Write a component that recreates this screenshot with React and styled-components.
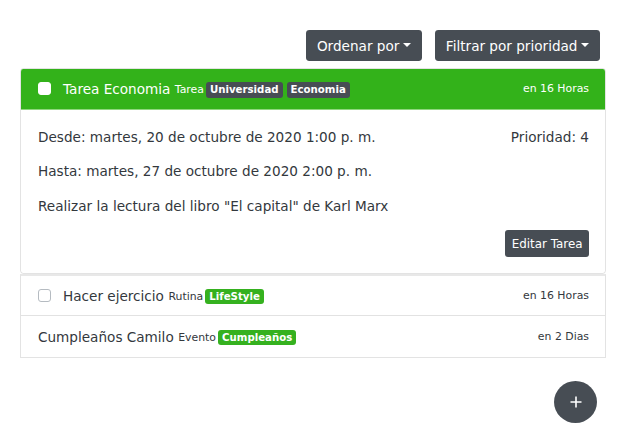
import React from "react";
import styled, { createGlobalStyle } from "styled-components";

const GlobalStyle = createGlobalStyle`
  html, body { margin: 0; padding: 0; background: #ffffff; }
  body {
    font-family: "DejaVu Sans", sans-serif;
    font-size: 13.6px;
    line-height: 1.5;
    color: #33383d;
  }
  * { box-sizing: border-box; }
`;

const DARK = "#474d54";
const GREEN = "#33b21a";

const Page = styled.div`
  padding: 30px 21px 40px 20px;
`;

const Toolbar = styled.div`
  display: flex;
  justify-content: flex-end;
  gap: 13px;
  padding-right: 6px;
  margin-bottom: 7px;
`;

const DropButton = styled.button`
  display: inline-flex;
  align-items: center;
  height: 31px;
  padding: 0 11px;
  border: none;
  border-radius: 3.4px;
  background: ${DARK};
  color: #ffffff;
  font-family: "DejaVu Sans", sans-serif;
  font-size: 13.6px;
  cursor: pointer;
  &::after {
    content: "";
    display: inline-block;
    margin-left: 3.5px;
    border-top: 4px solid #ffffff;
    border-left: 4px solid transparent;
    border-right: 4px solid transparent;
    position: relative;
    top: -1px;
  }
`;

const TaskList = styled.div`
  display: flex;
  flex-direction: column;
`;

const Card = styled.div`
  border: 1px solid rgba(0, 0, 0, 0.11);
  border-radius: 3.4px;
  overflow: hidden;
`;

const CardHeader = styled.div`
  display: flex;
  align-items: center;
  justify-content: space-between;
  height: 41px;
  padding: 0 16px 0 17px;
  background: ${GREEN};
  color: #ffffff;
  border-bottom: 1px solid #8fd67f;
`;

const TitleGroup = styled.div`
  display: flex;
  align-items: center;
  white-space: nowrap;
`;

const Check = styled.input.attrs({ type: "checkbox" })`
  appearance: none;
  -webkit-appearance: none;
  width: 13px;
  height: 13px;
  margin: 0 12px 0 0;
  border-radius: 3px;
  background: #ffffff;
  border: 1px solid ${(p) => (p.$onColor ? "#ffffff" : "#b5bbc1")};
  flex-shrink: 0;
`;

const Title = styled.span`
  font-size: 13.6px;
`;

const Kind = styled.small`
  font-size: 10.88px;
  margin-left: 4.5px;
  margin-right: 2px;
  position: relative;
  top: 1px;
`;

const Badge = styled.span`
  display: inline-block;
  font-size: 10.2px;
  font-weight: 700;
  line-height: 1;
  padding: 2.5px 4px;
  border-radius: 3px;
  color: #ffffff;
  background: ${(p) => (p.$tone === "green" ? "#35b11f" : DARK)};
  margin-left: ${(p) => (p.$gap ? "4px" : "0")};
  position: relative;
  top: 1px;
`;

const Due = styled.small`
  font-size: 10.88px;
  color: ${(p) => (p.$light ? "#ffffff" : "#33383d")};
`;

const CardBody = styled.div`
  padding: 17px 16px 16px 17px;
  display: flex;
  flex-direction: column;
`;

const InfoRow = styled.div`
  display: flex;
  justify-content: space-between;
  line-height: 20.4px;
  margin-bottom: 14px;
`;

const Actions = styled.div`
  display: flex;
  justify-content: flex-end;
`;

const SmallButton = styled.button`
  height: 27px;
  padding: 0 6.5px;
  border: none;
  border-radius: 3px;
  background: ${DARK};
  color: #ffffff;
  font-family: "DejaVu Sans", sans-serif;
  font-size: 11.9px;
  cursor: pointer;
`;

const Item = styled.div`
  display: flex;
  align-items: center;
  justify-content: space-between;
  height: 42px;
  padding: 0 16px 0 17px;
  border: 1px solid rgba(0, 0, 0, 0.11);
  border-top: ${(p) => (p.$first ? "2px solid rgba(0,0,0,0.09)" : "none")};
`;

const Fab = styled.button`
  position: fixed;
  right: 30px;
  bottom: 15px;
  width: 43px;
  height: 42px;
  border-radius: 50%;
  border: none;
  background: ${DARK};
  display: flex;
  align-items: center;
  justify-content: center;
  cursor: pointer;
`;

export default function App() {
  return (
    <>
      <GlobalStyle />
      <Page>
        <Toolbar>
          <DropButton>Ordenar por</DropButton>
          <DropButton>Filtrar por prioridad</DropButton>
        </Toolbar>
        <TaskList>
          <Card>
            <CardHeader>
              <TitleGroup>
                <Check $onColor />
                <Title>Tarea Economia</Title>
                <Kind>Tarea</Kind>
                <Badge>Universidad</Badge>
                <Badge $gap>Economia</Badge>
              </TitleGroup>
              <Due $light>en 16 Horas</Due>
            </CardHeader>
            <CardBody>
              <InfoRow>
                <span>Desde: martes, 20 de octubre de 2020 1:00 p. m.</span>
                <span>Prioridad: 4</span>
              </InfoRow>
              <InfoRow>
                <span>Hasta: martes, 27 de octubre de 2020 2:00 p. m.</span>
              </InfoRow>
              <InfoRow>
                <span>Realizar la lectura del libro "El capital" de Karl Marx</span>
              </InfoRow>
              <Actions>
                <SmallButton>Editar Tarea</SmallButton>
              </Actions>
            </CardBody>
          </Card>
          <Item $first>
            <TitleGroup>
              <Check />
              <Title>Hacer ejercicio</Title>
              <Kind>Rutina</Kind>
              <Badge $tone="green">LifeStyle</Badge>
            </TitleGroup>
            <Due>en 16 Horas</Due>
          </Item>
          <Item>
            <TitleGroup>
              <Title>Cumpleaños Camilo</Title>
              <Kind>Evento</Kind>
              <Badge $tone="green">Cumpleaños</Badge>
            </TitleGroup>
            <Due>en 2 Dias</Due>
          </Item>
        </TaskList>
      </Page>
      <Fab aria-label="Agregar">
        <svg width="12" height="12" viewBox="0 0 12 12">
          <path d="M6 0.5V11.5M0.5 6H11.5" stroke="#ffffff" strokeWidth="1.6" />
        </svg>
      </Fab>
    </>
  );
}
